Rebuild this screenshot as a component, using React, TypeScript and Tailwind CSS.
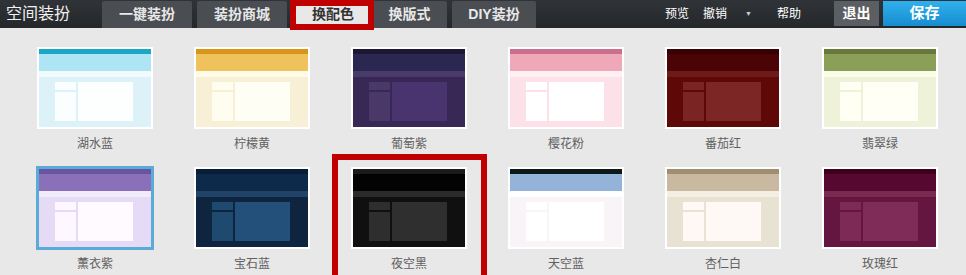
import React from "react";

type Theme = {
  name: string;
  strip: string;
  head: string;
  band: string;
  body: string;
  box: string;
  box2: string;
  active?: boolean;
};

const row1: Theme[] = [
  { name: "湖水蓝", strip: "bg-[#19a7c3]", head: "bg-[#ade5f5]", band: "bg-[#f1fbfe]", body: "bg-[#dcf1f8]", box: "bg-[#fbfeff]", box2: "bg-[#fdffff]" },
  { name: "柠檬黄", strip: "bg-[#d8951a]", head: "bg-[#efc25b]", band: "bg-[#fefbe6]", body: "bg-[#f7efd6]", box: "bg-[#fffdf0]", box2: "bg-[#fffef4]" },
  { name: "葡萄紫", strip: "bg-[#1c1834]", head: "bg-[#2a2750]", band: "bg-[#4b3a6c]", body: "bg-[#382856]", box: "bg-[#4a3869]", box2: "bg-[#4a3470]" },
  { name: "樱花粉", strip: "bg-[#cc6f8f]", head: "bg-[#efa8b8]", band: "bg-[#fff0f4]", body: "bg-[#fde1e9]", box: "bg-[#ffffff]", box2: "bg-[#ffffff]" },
  { name: "番茄红", strip: "bg-[#380002]", head: "bg-[#4b0406]", band: "bg-[#6f1a1a]", body: "bg-[#5e0808]", box: "bg-[#7b2424]", box2: "bg-[#7d2626]" },
  { name: "翡翠绿", strip: "bg-[#687838]", head: "bg-[#8c9f58]", band: "bg-[#fbfde7]", body: "bg-[#eef2d8]", box: "bg-[#fffff3]", box2: "bg-[#fffff6]" },
];

const row2: Theme[] = [
  { name: "薰衣紫", strip: "bg-[#6954a0]", head: "bg-[#8a70b8]", band: "bg-[#f1ecfa]", body: "bg-[#e5dbf6]", box: "bg-[#fdf8ff]", box2: "bg-[#fffaff]", active: true },
  { name: "宝石蓝", strip: "bg-[#091e36]", head: "bg-[#0d2a4a]", band: "bg-[#1f4468]", body: "bg-[#0f243e]", box: "bg-[#1f4a70]", box2: "bg-[#23507a]" },
  { name: "夜空黑", strip: "bg-[#1a1b1d]", head: "bg-[#030303]", band: "bg-[#2b2b2b]", body: "bg-[#101010]", box: "bg-[#2e2e2e]", box2: "bg-[#2f2f2f]" },
  { name: "天空蓝", strip: "bg-[#0e1818]", head: "bg-[#93b4d8]", band: "bg-[#ffffff]", body: "bg-[#f8f4f8]", box: "bg-[#ffffff]", box2: "bg-[#ffffff]" },
  { name: "杏仁白", strip: "bg-[#9f8f70]", head: "bg-[#c8b9a0]", band: "bg-[#f5efe3]", body: "bg-[#e8e2d3]", box: "bg-[#fff8f4]", box2: "bg-[#fff9f6]" },
  { name: "玫瑰红", strip: "bg-[#3e001a]", head: "bg-[#560830]", band: "bg-[#7a2a50]", body: "bg-[#641640]", box: "bg-[#7d2a56]", box2: "bg-[#7f2c59]" },
];

function Card({ t }: { t: Theme }) {
  return (
    <div className="flex flex-col items-center w-[116px]">
      <div
        className={
          t.active
            ? "w-[116px] h-[82px] border-2 border-[#5aabd8] outline outline-[#5aabd8] flex flex-col"
            : "w-[116px] h-[82px] border-2 border-white flex flex-col"
        }
      >
        <div className={`h-[5px] ${t.strip}`} />
        <div className={`h-[17px] ${t.head}`} />
        <div className={`h-[6px] ${t.band}`} />
        <div className={`flex-1 flex gap-[2px] pl-[16px] pt-[5px] ${t.body}`}>
          <div className="w-[21px] flex flex-col gap-[2px]">
            <div className={`h-[8px] ${t.box}`} />
            <div className={`h-[29px] ${t.box}`} />
          </div>
          <div className={`w-[55px] h-[39px] ${t.box2}`} />
        </div>
      </div>
      <div className="mt-[7px] text-[12px] leading-[16px] text-[#606060]">
        {t.name}
      </div>
    </div>
  );
}

function Tab({ label, w }: { label: string; w: string }) {
  return (
    <div className={`h-[27px] mt-px flex items-center justify-center bg-[#4a4e53] rounded-t-[2px] text-[14px] font-bold text-[#e8e8e8] ${w}`}>
      {label}
    </div>
  );
}

export default function App() {
  return (
    <div
      className="relative w-[966px] h-[275px] bg-[#e8e8e8] overflow-hidden"
      style={{ fontFamily: '"Liberation Sans", "Noto Sans CJK SC", sans-serif' }}
    >
      {/* top bar */}
      <div className="h-[28px] bg-gradient-to-b from-[#303337] to-[#25282b] flex items-start">
        <div className="w-[102px] h-[28px] pl-[6px] flex items-center text-[16px] text-[#f2f2f2]">
          空间装扮
        </div>
        <div className="flex">
          <Tab label="一键装扮" w="w-[90px]" />
          <div className="ml-[5px]">
            <Tab label="装扮商城" w="w-[90px]" />
          </div>
          <div className="ml-[7px] h-[28px] w-[78px] flex items-center justify-center bg-[#e8e8e8] text-[14px] font-bold text-[#333]">
            换配色
          </div>
          <Tab label="换版式" w="w-[75px]" />
          <div className="ml-[5px]">
            <Tab label="DIY装扮" w="w-[84px]" />
          </div>
        </div>
        <div className="ml-auto h-[28px] flex items-center text-[12px] text-white">
          <span>预览</span>
          <span className="ml-[14px]">撤销</span>
          <span className="ml-[18px] text-[7px] text-[#ccc]">▼</span>
          <span className="ml-[25px]">帮助</span>
          <div className="ml-[33px] mt-[-2px] w-[45px] h-[25px] bg-[#5b5e62] flex items-center justify-center text-[14px] font-bold">
            退出
          </div>
          <div className="ml-[4px] mt-[-2px] w-[83px] h-[25px] bg-gradient-to-b from-[#30b0ee] to-[#168dce] flex items-center justify-center text-[15px] font-bold">
            保存
          </div>
        </div>
      </div>

      {/* colour themes */}
      <div className="pl-[37px] pt-[19px] flex flex-col gap-[15px]">
        <div className="flex gap-[41px]">
          {row1.map((t) => (
            <Card key={t.name} t={t} />
          ))}
        </div>
        <div className="flex gap-[41px]">
          {row2.map((t) => (
            <Card key={t.name} t={t} />
          ))}
        </div>
      </div>

      {/* red annotation boxes */}
      <div className="absolute left-[290px] top-0 w-[84px] h-[30px] border-[6px] border-[#c00000]" />
      <div className="absolute left-[332px] top-[154px] w-[155px] h-[130px] border-[6px] border-[#c00000]" />
    </div>
  );
}
